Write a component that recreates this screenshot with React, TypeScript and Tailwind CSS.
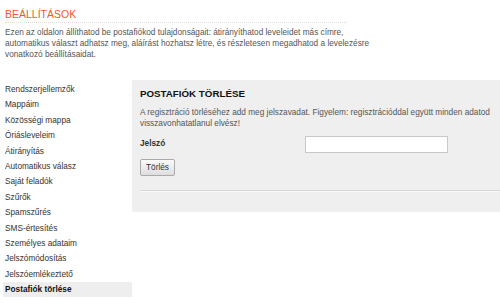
import React from 'react';

const menuItems = [
  'Rendszerjellemzők',
  'Mappáim',
  'Közösségi mappa',
  'Óriásleveleim',
  'Átirányítás',
  'Automatikus válasz',
  'Saját feladók',
  'Szűrők',
  'Spamszűrés',
  'SMS-értesítés',
  'Személyes adataim',
  'Jelszómódosítás',
  'Jelszóemlékeztető',
  'Postafiók törlése',
];

export default function App() {
  const active = 'Postafiók törlése';

  return (
    <div className="w-[500px] h-[303px] overflow-hidden bg-white font-['Liberation_Sans',Arial,sans-serif]">
      <div className="px-[5px] pt-[8px]">
        <h1 className="w-[342px] border-b border-dotted border-[#dcdcdc] pb-[2px] text-[10.5px] leading-[12px] text-[#f15a24]">
          BEÁLLÍTÁSOK
        </h1>
        <p className="mt-[4px] w-[385px] text-[8.25px] leading-[11px] text-[#555]">
          Ezen az oldalon állíthatod be postafiókod tulajdonságait: átirányíthatod leveleidet más címre,
          automatikus választ adhatsz meg, aláírást hozhatsz létre, és részletesen megadhatod a levelezésre
          vonatkozó beállításaidat.
        </p>
      </div>

      <div className="mt-[20px] flex items-start">
        <ul className="w-[132px] pt-[2px]">
          {menuItems.map((item) => (
            <li
              key={item}
              className={
                item === active
                  ? 'ml-[3px] h-[15.4px] bg-[#eeeeee] pl-[2px] text-[8.25px] leading-[15.4px] font-bold text-[#111]'
                  : 'ml-[3px] h-[15.4px] pl-[2px] text-[8.25px] leading-[15.4px] text-[#333]'
              }
            >
              {item}
            </li>
          ))}
        </ul>

        <div className="flex-1 bg-[#efefef] pl-[8px] pt-[8px] pb-[20px]">
          <h2 className="text-[9.75px] leading-[12px] font-bold text-[#111]">POSTAFIÓK TÖRLÉSE</h2>
          <p className="mt-[6.5px] text-[8.25px] leading-[11px] text-[#555]">
            A regisztráció törléséhez add meg jelszavadat. Figyelem: regisztrációddal együtt minden adatod
            visszavonhatatlanul elvész!
          </p>
          <div className="mt-[7.5px] flex items-center">
            <label className="w-[165px] text-[8.25px] font-bold text-[#333]">Jelszó</label>
            <input
              type="password"
              className="h-[17px] w-[143px] border border-[#c8c8c8] bg-white outline-none"
            />
          </div>
          <button className="mt-[5px] h-[17px] w-[35px] rounded-[2px] border border-[#aaa] bg-gradient-to-b from-[#fafafa] to-[#dedede] text-[8.25px] leading-[15px] text-[#333]">
            Törlés
          </button>
          <div className="mt-[13px] border-t border-[#d6d6d6] border-b border-b-[#f8f8f8]" />
        </div>
      </div>
    </div>
  );
}
